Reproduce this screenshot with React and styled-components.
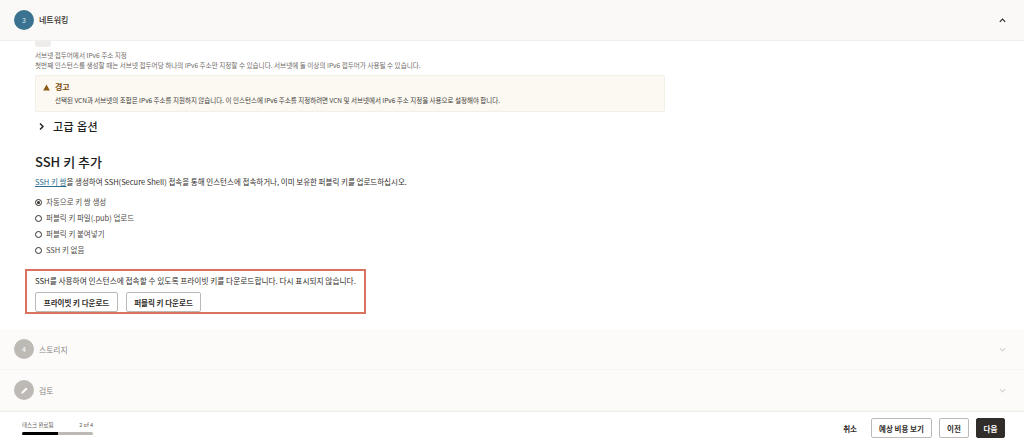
import React from 'react';
import styled, { createGlobalStyle } from 'styled-components';

const Global = createGlobalStyle`
  html, body { margin: 0; padding: 0; background: #fff; }
  body { font-family: "Noto Sans CJK KR", "Noto Sans", sans-serif; color: #312d2a; }
  * { box-sizing: border-box; }
`;
const Page = styled.div`width:1024px;height:444px;overflow:hidden;display:flex;flex-direction:column;`;
const SectionHead = styled.div`
  height:${p => p.$h}px;flex:none;display:flex;align-items:center;padding:0 17px 0 14px;
  background:${p => p.$muted ? '#fcfbfa' : '#faf9f7'};
  border-bottom:1px solid ${p => p.$muted ? '#f7f5f2' : '#f1efec'};
`;
const Circle = styled.div`
  width:20px;height:20px;border-radius:50%;display:flex;align-items:center;justify-content:center;
  font-size:7px;color:${p => p.$active ? '#dfeaf0' : '#fff'};background:${p => p.$active ? '#3a7290' : '#bdb9b4'};
`;
const SectionTitle = styled.div`
  margin:${p => p.$active ? 0 : 1}px 0 0 5px;flex:1;font-size:${p => p.$active ? 8 : 7.8}px;line-height:12px;font-weight:${p => p.$active ? 500 : 400};
  color:${p => p.$active ? '#312d2a' : '#8a8683'};
`;
const Content = styled.div`flex:none;height:288px;padding:0 0 0 35px;background:#fff;display:flex;flex-direction:column;overflow:hidden;`;
const ToggleStub = styled.div`width:16px;height:6px;background:#eeecea;border-radius:0 0 3px 3px;`;
const Hint = styled.div`font-size:6.6px;line-height:10px;color:#6f6b67;white-space:nowrap;`;
const HintBlock = styled.div`margin-top:3px;`;
const Alert = styled.div`
  margin-top:5px;width:630px;height:37px;padding:5px 0 0 7px;background:#fcf8f2;border:1px solid #f3eee6;border-radius:2px;
  display:grid;grid-template-columns:12px 1fr;grid-template-rows:12px 12px;row-gap:1px;
`;
const AlertIcon = styled.div`display:flex;align-items:center;`;
const AlertTitle = styled.div`font-size:8px;line-height:12px;font-weight:700;color:#7a4a0c;`;
const AlertText = styled.div`grid-column:2;font-size:6.5px;line-height:12px;color:#403c38;white-space:nowrap;`;
const Advanced = styled.div`margin-top:6px;height:16px;display:flex;align-items:center;gap:8px;padding-left:3px;`;
const AdvancedLabel = styled.div`font-size:11px;line-height:16px;font-weight:500;color:#201d1b;letter-spacing:.4px;`;
const Heading = styled.h2`margin:18px 0 0;font-size:13px;line-height:20px;font-weight:500;color:#201d1b;`;
const Para = styled.p`margin:4px 0 0;font-size:7.5px;line-height:12px;color:#312d2a;white-space:nowrap;`;
const Link = styled.a`color:#2b6c8f;text-decoration:underline;`;
const RadioList = styled.div`margin-top:8px;display:flex;flex-direction:column;gap:4px;`;
const RadioRow = styled.label`display:flex;align-items:center;gap:4px;height:12px;font-size:7.5px;line-height:12px;color:#4f4b47;`;
const RadioDot = styled.span`
  width:7px;height:7px;border-radius:50%;border:1px solid #312d2a;display:flex;align-items:center;justify-content:center;
  &::after{content:"";width:3px;height:3px;border-radius:50%;background:${p => p.$on ? '#312d2a' : 'transparent'};}
`;
const Callout = styled.div`
  margin:13px 0 0 -10px;width:341px;height:45px;border:2px solid #d9735f;padding:4px 0 0 8px;
  display:flex;flex-direction:column;
`;
const CalloutText = styled.div`font-size:7.7px;line-height:12px;color:#312d2a;white-space:nowrap;`;
const ButtonRow = styled.div`margin-top:5px;display:flex;gap:8px;`;
const Btn = styled.button`
  width:${p => p.$w}px;height:20px;padding:0;font-family:inherit;font-size:7.5px;font-weight:700;border-radius:2px;
  color:${p => p.$dark ? '#fff' : '#312d2a'};background:${p => p.$dark ? '#312d2a' : '#fff'};
  border:1px solid ${p => p.$dark ? '#312d2a' : '#bdb9b4'};white-space:nowrap;
`;
const Footer = styled.div`flex:1;display:flex;align-items:center;justify-content:space-between;padding:0 19px 0 22px;background:#fff;border-top:1px solid #f1efec;`;
const Progress = styled.div`width:71px;margin-top:-1px;`;
const ProgressLabels = styled.div`display:flex;justify-content:space-between;font-size:5.5px;line-height:8px;color:#5f5b57;`;
const Track = styled.div`margin-top:3px;height:3px;border-radius:2px;background:#bdb9b4;overflow:hidden;`;
const Fill = styled.div`height:100%;background:#000;`;
const Actions = styled.div`display:flex;align-items:center;gap:7px;`;
const Cancel = styled.span`font-size:7.5px;font-weight:700;color:#312d2a;margin-right:7px;`;
const Chevron = ({ up, color, size = 9 }) => (
  <svg width={size} height={size} viewBox="0 0 10 10" fill="none" stroke={color} strokeWidth="1.3">
    <path d={up ? 'M2 6.5 5 3.5 8 6.5' : 'M2 3.5 5 6.5 8 3.5'} />
  </svg>
);
export default function App() {
  return (
    <Page>
      <Global />
      <SectionHead $h={41}>
        <Circle $active>3</Circle>
        <SectionTitle $active>네트워킹</SectionTitle>
        <Chevron up color="#312d2a" />
      </SectionHead>
      <Content>
        <ToggleStub />
        <HintBlock>
          <Hint>서브넷 접두어에서 IPv6 주소 지정</Hint>
          <Hint>첫번째 인스턴스를 생성할 때는 서브넷 접두어당 하나의 IPv6 주소만 지정할 수 있습니다. 서브넷에 둘 이상의 IPv6 접두어가 사용될 수 있습니다.</Hint>
        </HintBlock>
        <Alert>
          <AlertIcon>
            <svg width="7" height="7" viewBox="0 0 10 10"><path d="M5 .8 9.8 9.4H.2Z" fill="#8a5a14" /></svg>
          </AlertIcon>
          <AlertTitle>경고</AlertTitle>
          <AlertText>선택된 VCN과 서브넷의 조합은 IPv6 주소를 지원하지 않습니다. 이 인스턴스에 IPv6 주소를 지정하려면 VCN 및 서브넷에서 IPv6 주소 지정을 사용으로 설정해야 합니다.</AlertText>
        </Alert>
        <Advanced>
          <svg width="7" height="9" viewBox="0 0 7 9" fill="none" stroke="#201d1b" strokeWidth="1.4"><path d="M2 1.5 5 4.5 2 7.5" /></svg>
          <AdvancedLabel>고급 옵션</AdvancedLabel>
        </Advanced>
        <Heading>SSH 키 추가</Heading>
        <Para><Link>SSH 키 쌍</Link>을 생성하여 SSH(Secure Shell) 접속을 통해 인스턴스에 접속하거나, 이미 보유한 퍼블릭 키를 업로드하십시오.</Para>
        <RadioList>
          <RadioRow><RadioDot $on />자동으로 키 쌍 생성</RadioRow>
          <RadioRow><RadioDot />퍼블릭 키 파일(.pub) 업로드</RadioRow>
          <RadioRow><RadioDot />퍼블릭 키 붙여넣기</RadioRow>
          <RadioRow><RadioDot />SSH 키 없음</RadioRow>
        </RadioList>
        <Callout>
          <CalloutText>SSH를 사용하여 인스턴스에 접속할 수 있도록 프라이빗 키를 다운로드합니다. 다시 표시되지 않습니다.</CalloutText>
          <ButtonRow>
            <Btn $w={83}>프라이빗 키 다운로드</Btn>
            <Btn $w={75}>퍼블릭 키 다운로드</Btn>
          </ButtonRow>
        </Callout>
      </Content>
      <SectionHead $h={41} $muted>
        <Circle>4</Circle>
        <SectionTitle>스토리지</SectionTitle>
        <Chevron color="#d5d2ce" />
      </SectionHead>
      <SectionHead $h={41} $muted>
        <Circle>
          <svg width="9" height="9" viewBox="0 0 10 10"><path d="M1.5 8.5 2 6.5 6.8 1.7 8.3 3.2 3.5 8Z" fill="#fff" /></svg>
        </Circle>
        <SectionTitle>검토</SectionTitle>
        <Chevron color="#d5d2ce" />
      </SectionHead>
      <Footer>
        <Progress>
          <ProgressLabels><span>태스크 완료됨</span><span>2 of 4</span></ProgressLabels>
          <Track><Fill style={{ width: '50%' }} /></Track>
        </Progress>
        <Actions>
          <Cancel>취소</Cancel>
          <Btn $w={61}>예상 비용 보기</Btn>
          <Btn $w={30}>이전</Btn>
          <Btn $w={29} $dark>다음</Btn>
        </Actions>
      </Footer>
    </Page>
  );
}
